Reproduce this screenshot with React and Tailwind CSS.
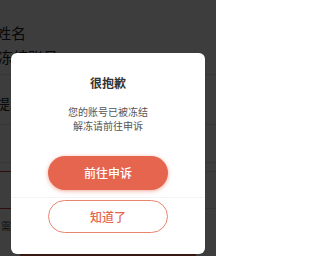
import React from "react";

const font = { fontFamily: '"Noto Sans CJK SC", "Noto Sans", sans-serif' };

function PageBehind() {
    return (
        <div className="flex flex-col text-[#222]">
            <div className="h-[22px]"></div>
            <div className="ml-[-4px] text-[15px] leading-[22px]">姓名</div>
            <div className="ml-[-2px] mt-[2px] text-[15px] leading-[22px]">冻结账号</div>
            <div className="mt-[6px] h-px bg-[#e6e6e6]"></div>
            <div className="ml-[-4px] mt-[18px] text-[14px] leading-[20px]">提现账户</div>
            <div className="mt-[11px] h-px bg-[#e6e6e6]"></div>
            <div className="mt-[37px] h-px bg-[#e6e6e6]"></div>
            <div className="mt-[8px] flex">
                <div className="w-[24px] h-px bg-[#c0392b]"></div>
                <div className="flex-1 h-px bg-[#e6e6e6]"></div>
            </div>
            <div className="mt-[36px] flex">
                <div className="w-[24px] h-px bg-[#c0392b]"></div>
                <div className="flex-1 h-px bg-[#e6e6e6]"></div>
            </div>
            <div className="ml-[1px] mt-[10px] text-[10px] leading-[14px] text-[#444]">需要帮助</div>
            <div className="mx-[20px] mt-[15px] h-[10px] bg-[#e5654f]"></div>
        </div>
    );
}

export default function App() {
    return (
        <div className="relative w-[216px] h-[256px] overflow-hidden bg-white" style={font}>
            <PageBehind />

            {/* overlay */}
            <div className="absolute inset-0 bg-black/[0.76]"></div>

            {/* dialog */}
            <div className="absolute left-[11px] top-[53px] w-[194px] h-[201px] rounded-[6px] bg-white flex flex-col items-center pt-[22px]">
                <h2 className="text-[12px] leading-[16px] font-semibold text-[#333]">很抱歉</h2>
                <div className="mt-[14px] text-center text-[10px] leading-[14px] text-[#555]">
                    <p>您的账号已被冻结</p>
                    <p>解冻请前往申诉</p>
                </div>
                <button className="mt-[23px] w-[120px] h-[34px] rounded-full bg-[#e5654f] text-white text-[12px] font-medium shadow-[0_1px_4px_rgba(229,101,79,0.55)]">
                    前往申诉
                </button>
                <div className="mt-[7px] w-full h-px bg-[#f4f4f4]"></div>
                <button className="mt-[2px] w-[120px] h-[33px] rounded-full border border-[#e9846f] bg-white text-[#e5654f] text-[12px] font-medium">
                    知道了
                </button>
            </div>
        </div>
    );
}
